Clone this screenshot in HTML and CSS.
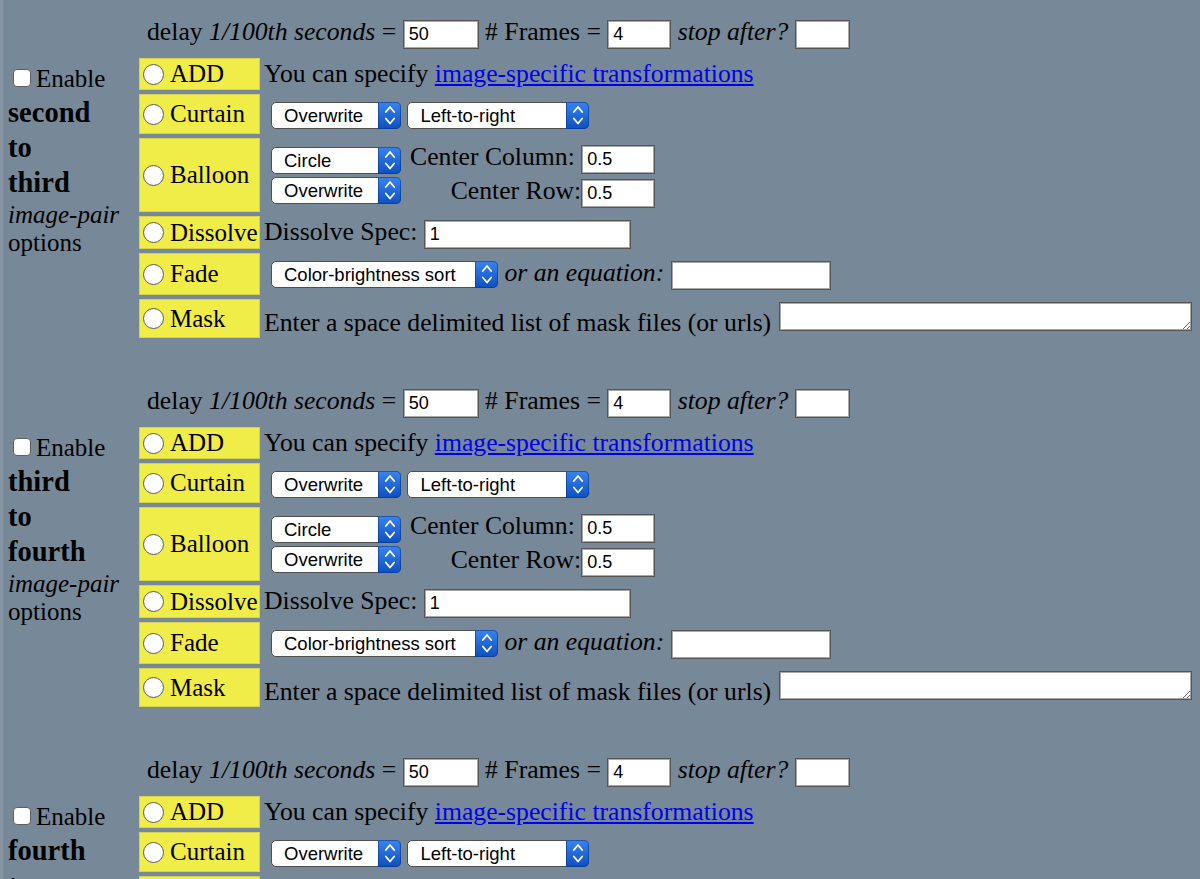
FILE: index.html
```html
<!DOCTYPE html>
<html>
<head>
<meta charset="utf-8">
<title>Image-pair options</title>
<link rel="stylesheet" href="styles.css">
</head>
<body>

<div class="pair">
  <div class="delay"><div class="line">delay <i>1/100th seconds</i> = <input class="in w76" value="50"> # Frames = <input class="in w64" value="4"> <i>stop after?</i> <input class="in w55"></div></div>
  <div class="side">
    <label class="enable"><input type="checkbox" class="cb">Enable</label>
    <b class="big">second</b>
    <b class="big">to</b>
    <b class="big">third</b>
    <i class="ip">image-pair</i>
    <span class="op">options</span>
  </div>
  <label class="opt r2"><input type="radio" name="m1" class="rd">ADD</label>
  <div class="c r2"><div class="line">You can specify <a href="#">image-specific transformations</a></div></div>
  <label class="opt r3"><input type="radio" name="m1" class="rd">Curtain</label>
  <div class="c r3"><div class="line"><span class="sel ml"><select class="w130"><option>Overwrite</option></select><span class="arr"><svg width="12" height="27" viewBox="0 0 12 27"><path d="M1.8 10 L6 5 L10.2 10 M1.8 16.5 L6 21.5 L10.2 16.5" fill="none" stroke="#fff" stroke-width="1.8" stroke-linecap="round" stroke-linejoin="round"/></svg></span></span> <span class="sel"><select class="w182"><option>Left-to-right</option></select><span class="arr"><svg width="12" height="27" viewBox="0 0 12 27"><path d="M1.8 10 L6 5 L10.2 10 M1.8 16.5 L6 21.5 L10.2 16.5" fill="none" stroke="#fff" stroke-width="1.8" stroke-linecap="round" stroke-linejoin="round"/></svg></span></span></div></div>
  <label class="opt r4"><input type="radio" name="m1" class="rd">Balloon</label>
  <div class="c r4">
    <div class="stack">
      <span class="sel"><select class="w130"><option>Circle</option></select><span class="arr"><svg width="12" height="27" viewBox="0 0 12 27"><path d="M1.8 10 L6 5 L10.2 10 M1.8 16.5 L6 21.5 L10.2 16.5" fill="none" stroke="#fff" stroke-width="1.8" stroke-linecap="round" stroke-linejoin="round"/></svg></span></span>
      <span class="sel"><select class="w130"><option>Overwrite</option></select><span class="arr"><svg width="12" height="27" viewBox="0 0 12 27"><path d="M1.8 10 L6 5 L10.2 10 M1.8 16.5 L6 21.5 L10.2 16.5" fill="none" stroke="#fff" stroke-width="1.8" stroke-linecap="round" stroke-linejoin="round"/></svg></span></span>
    </div>
    <div class="cr">
      <div class="crl">Center Column: <input class="in w74" value="0.5"></div>
      <div class="crl">Center Row:<input class="in w74" value="0.5"></div>
    </div>
  </div>
  <label class="opt r5"><input type="radio" name="m1" class="rd">Dissolve</label>
  <div class="c r5"><div class="line">Dissolve Spec: <input class="in w207" value="1"></div></div>
  <label class="opt r6"><input type="radio" name="m1" class="rd">Fade</label>
  <div class="c r6"><div class="line"><span class="sel ml"><select class="w227"><option>Color-brightness sort</option></select><span class="arr"><svg width="12" height="27" viewBox="0 0 12 27"><path d="M1.8 10 L6 5 L10.2 10 M1.8 16.5 L6 21.5 L10.2 16.5" fill="none" stroke="#fff" stroke-width="1.8" stroke-linecap="round" stroke-linejoin="round"/></svg></span></span> <i>or an equation:</i> <input class="in w160"></div></div>
  <label class="opt r7"><input type="radio" name="m1" class="rd">Mask</label>
  <div class="c r7 mask"><span class="mtxt">Enter a space delimited list of mask files (or urls)</span><textarea class="ta"></textarea></div>
</div>

<div class="pair">
  <div class="delay"><div class="line">delay <i>1/100th seconds</i> = <input class="in w76" value="50"> # Frames = <input class="in w64" value="4"> <i>stop after?</i> <input class="in w55"></div></div>
  <div class="side">
    <label class="enable"><input type="checkbox" class="cb">Enable</label>
    <b class="big">third</b>
    <b class="big">to</b>
    <b class="big">fourth</b>
    <i class="ip">image-pair</i>
    <span class="op">options</span>
  </div>
  <label class="opt r2"><input type="radio" name="m2" class="rd">ADD</label>
  <div class="c r2"><div class="line">You can specify <a href="#">image-specific transformations</a></div></div>
  <label class="opt r3"><input type="radio" name="m2" class="rd">Curtain</label>
  <div class="c r3"><div class="line"><span class="sel ml"><select class="w130"><option>Overwrite</option></select><span class="arr"><svg width="12" height="27" viewBox="0 0 12 27"><path d="M1.8 10 L6 5 L10.2 10 M1.8 16.5 L6 21.5 L10.2 16.5" fill="none" stroke="#fff" stroke-width="1.8" stroke-linecap="round" stroke-linejoin="round"/></svg></span></span> <span class="sel"><select class="w182"><option>Left-to-right</option></select><span class="arr"><svg width="12" height="27" viewBox="0 0 12 27"><path d="M1.8 10 L6 5 L10.2 10 M1.8 16.5 L6 21.5 L10.2 16.5" fill="none" stroke="#fff" stroke-width="1.8" stroke-linecap="round" stroke-linejoin="round"/></svg></span></span></div></div>
  <label class="opt r4"><input type="radio" name="m2" class="rd">Balloon</label>
  <div class="c r4">
    <div class="stack">
      <span class="sel"><select class="w130"><option>Circle</option></select><span class="arr"><svg width="12" height="27" viewBox="0 0 12 27"><path d="M1.8 10 L6 5 L10.2 10 M1.8 16.5 L6 21.5 L10.2 16.5" fill="none" stroke="#fff" stroke-width="1.8" stroke-linecap="round" stroke-linejoin="round"/></svg></span></span>
      <span class="sel"><select class="w130"><option>Overwrite</option></select><span class="arr"><svg width="12" height="27" viewBox="0 0 12 27"><path d="M1.8 10 L6 5 L10.2 10 M1.8 16.5 L6 21.5 L10.2 16.5" fill="none" stroke="#fff" stroke-width="1.8" stroke-linecap="round" stroke-linejoin="round"/></svg></span></span>
    </div>
    <div class="cr">
      <div class="crl">Center Column: <input class="in w74" value="0.5"></div>
      <div class="crl">Center Row:<input class="in w74" value="0.5"></div>
    </div>
  </div>
  <label class="opt r5"><input type="radio" name="m2" class="rd">Dissolve</label>
  <div class="c r5"><div class="line">Dissolve Spec: <input class="in w207" value="1"></div></div>
  <label class="opt r6"><input type="radio" name="m2" class="rd">Fade</label>
  <div class="c r6"><div class="line"><span class="sel ml"><select class="w227"><option>Color-brightness sort</option></select><span class="arr"><svg width="12" height="27" viewBox="0 0 12 27"><path d="M1.8 10 L6 5 L10.2 10 M1.8 16.5 L6 21.5 L10.2 16.5" fill="none" stroke="#fff" stroke-width="1.8" stroke-linecap="round" stroke-linejoin="round"/></svg></span></span> <i>or an equation:</i> <input class="in w160"></div></div>
  <label class="opt r7"><input type="radio" name="m2" class="rd">Mask</label>
  <div class="c r7 mask"><span class="mtxt">Enter a space delimited list of mask files (or urls)</span><textarea class="ta"></textarea></div>
</div>

<div class="pair">
  <div class="delay"><div class="line">delay <i>1/100th seconds</i> = <input class="in w76" value="50"> # Frames = <input class="in w64" value="4"> <i>stop after?</i> <input class="in w55"></div></div>
  <div class="side">
    <label class="enable"><input type="checkbox" class="cb">Enable</label>
    <b class="big">fourth</b>
    <b class="big">to</b>
    <b class="big">fifth</b>
    <i class="ip">image-pair</i>
    <span class="op">options</span>
  </div>
  <label class="opt r2"><input type="radio" name="m3" class="rd">ADD</label>
  <div class="c r2"><div class="line">You can specify <a href="#">image-specific transformations</a></div></div>
  <label class="opt r3"><input type="radio" name="m3" class="rd">Curtain</label>
  <div class="c r3"><div class="line"><span class="sel ml"><select class="w130"><option>Overwrite</option></select><span class="arr"><svg width="12" height="27" viewBox="0 0 12 27"><path d="M1.8 10 L6 5 L10.2 10 M1.8 16.5 L6 21.5 L10.2 16.5" fill="none" stroke="#fff" stroke-width="1.8" stroke-linecap="round" stroke-linejoin="round"/></svg></span></span> <span class="sel"><select class="w182"><option>Left-to-right</option></select><span class="arr"><svg width="12" height="27" viewBox="0 0 12 27"><path d="M1.8 10 L6 5 L10.2 10 M1.8 16.5 L6 21.5 L10.2 16.5" fill="none" stroke="#fff" stroke-width="1.8" stroke-linecap="round" stroke-linejoin="round"/></svg></span></span></div></div>
  <label class="opt r4"><input type="radio" name="m3" class="rd">Balloon</label>
  <div class="c r4">
    <div class="stack">
      <span class="sel"><select class="w130"><option>Circle</option></select><span class="arr"><svg width="12" height="27" viewBox="0 0 12 27"><path d="M1.8 10 L6 5 L10.2 10 M1.8 16.5 L6 21.5 L10.2 16.5" fill="none" stroke="#fff" stroke-width="1.8" stroke-linecap="round" stroke-linejoin="round"/></svg></span></span>
      <span class="sel"><select class="w130"><option>Overwrite</option></select><span class="arr"><svg width="12" height="27" viewBox="0 0 12 27"><path d="M1.8 10 L6 5 L10.2 10 M1.8 16.5 L6 21.5 L10.2 16.5" fill="none" stroke="#fff" stroke-width="1.8" stroke-linecap="round" stroke-linejoin="round"/></svg></span></span>
    </div>
    <div class="cr">
      <div class="crl">Center Column: <input class="in w74" value="0.5"></div>
      <div class="crl">Center Row:<input class="in w74" value="0.5"></div>
    </div>
  </div>
  <label class="opt r5"><input type="radio" name="m3" class="rd">Dissolve</label>
  <div class="c r5"><div class="line">Dissolve Spec: <input class="in w207" value="1"></div></div>
  <label class="opt r6"><input type="radio" name="m3" class="rd">Fade</label>
  <div class="c r6"><div class="line"><span class="sel ml"><select class="w227"><option>Color-brightness sort</option></select><span class="arr"><svg width="12" height="27" viewBox="0 0 12 27"><path d="M1.8 10 L6 5 L10.2 10 M1.8 16.5 L6 21.5 L10.2 16.5" fill="none" stroke="#fff" stroke-width="1.8" stroke-linecap="round" stroke-linejoin="round"/></svg></span></span> <i>or an equation:</i> <input class="in w160"></div></div>
  <label class="opt r7"><input type="radio" name="m3" class="rd">Mask</label>
  <div class="c r7 mask"><span class="mtxt">Enter a space delimited list of mask files (or urls)</span><textarea class="ta"></textarea></div>
</div>

</body>
</html>
```

FILE: styles.css
```css
html {
  background: #778899;
  overflow: hidden;
}

body {
  margin: 0;
  padding: 11px 0 0 5px;
  border-left: 3px solid #8794a4;
  min-height: 100vh;
  box-sizing: border-box;
  font-family: "Liberation Serif", "Times New Roman", serif;
  font-size: 25.7px;
  color: #000;
}

.pair {
  display: grid;
  grid-template-columns: 131px 121px 1fr;
  grid-template-rows: 43px 32px 40px 74px 33px 42px 39px;
  row-gap: 4px;
  margin-bottom: 42px;
}

.delay {
  grid-column: 2 / 4;
  grid-row: 1;
  display: flex;
  align-items: center;
  padding-left: 8px;
  white-space: nowrap;
}

.side {
  grid-column: 1;
  grid-row: 2 / 8;
  align-self: start;
  display: flex;
  flex-direction: column;
  align-items: flex-start;
  padding-top: 3.5px;
}

.enable {
  display: flex;
  align-items: center;
  height: 33px;
  line-height: 33px;
  font-size: 25px;
}

.cb {
  appearance: none;
  -webkit-appearance: none;
  width: 18px;
  height: 18px;
  margin: 0 5px 0 5px;
  border: 1px solid #5f5f5f;
  border-radius: 4px;
  background: #fff;
  box-sizing: border-box;
  flex: none;
}

.big {
  font-size: 28.5px;
  line-height: 35px;
  font-weight: bold;
}

.ip {
  line-height: 29px;
  font-size: 25px;
}

.op {
  line-height: 28px;
  font-size: 25px;
}

.r2 { grid-row: 2; }
.r3 { grid-row: 3; }
.r4 { grid-row: 4; }
.r5 { grid-row: 5; }
.r6 { grid-row: 6; }
.r7 { grid-row: 7; }

.opt {
  grid-column: 2;
  display: flex;
  align-items: center;
  padding-left: 3px;
  background: #f0ec48;
  border: 1px solid #d6d24f;
  box-sizing: border-box;
  white-space: nowrap;
  font-size: 25px;
}

.rd {
  appearance: none;
  -webkit-appearance: none;
  width: 21px;
  height: 21px;
  margin: 0 6px 0 0;
  border: 1.5px solid #5a5a5a;
  border-radius: 50%;
  background: #fff;
  box-sizing: border-box;
  flex: none;
}

.c {
  grid-column: 3;
  display: flex;
  align-items: center;
  padding-left: 4px;
  white-space: nowrap;
}

a {
  color: #0000ee;
  text-decoration: underline;
}

.in {
  font: 18px "Liberation Sans", Arial, sans-serif;
  height: 29px;
  box-sizing: border-box;
  border: 1px solid #555;
  box-shadow: inset 0 0 0 1px #a9a9a9;
  padding: 0 5px;
  margin: 0;
  background: #fff;
  color: #000;
  vertical-align: baseline;
}

.w55 { width: 55px; }
.w64 { width: 64px; }
.w74 { width: 74px; }
.w76 { width: 76px; }
.w160 { width: 160px; }
.w207 { width: 207px; }

.sel {
  position: relative;
  display: inline-block;
  font-size: 0;
  line-height: 0;
  vertical-align: baseline;
}

.sel select {
  appearance: none;
  -webkit-appearance: none;
  font: 18.5px "Liberation Sans", Arial, sans-serif;
  height: 27px;
  margin: 0;
  padding: 0 24px 0 12px;
  border: 1px solid #4f4f4f;
  border-radius: 5px;
  background: #fff;
  color: #000;
  box-sizing: border-box;
}

.w130 { width: 130px; }
.w182 { width: 182px; }
.w227 { width: 227px; }

.arr {
  position: absolute;
  top: 0;
  right: 0;
  bottom: 0;
  width: 23px;
  border-radius: 0 5px 5px 0;
  background: linear-gradient(#3a84ef, #0d50bd);
  box-shadow: inset 0 0 0 1px rgba(5, 50, 130, 0.55);
  display: flex;
  align-items: center;
  justify-content: center;
  pointer-events: none;
}

.ml {
  margin-left: 7px;
}

.stack {
  display: flex;
  flex-direction: column;
  gap: 3px;
  margin-left: 7px;
}

.cr {
  display: flex;
  flex-direction: column;
  align-items: flex-end;
  gap: 2px;
  margin-left: 9px;
}

.mask {
  align-items: flex-start;
}

.mtxt {
  margin-top: 8.5px;
  line-height: 30px;
  margin-right: 8px;
}

.ta {
  margin-top: 3px;
  width: 413px;
  height: 29px;
  box-sizing: border-box;
  border: 1px solid #555;
  box-shadow: inset 0 0 0 1px #a9a9a9;
  background: #fff;
  font: 16px "Liberation Sans", Arial, sans-serif;
  padding: 2px 4px;
  resize: both;
}
```
